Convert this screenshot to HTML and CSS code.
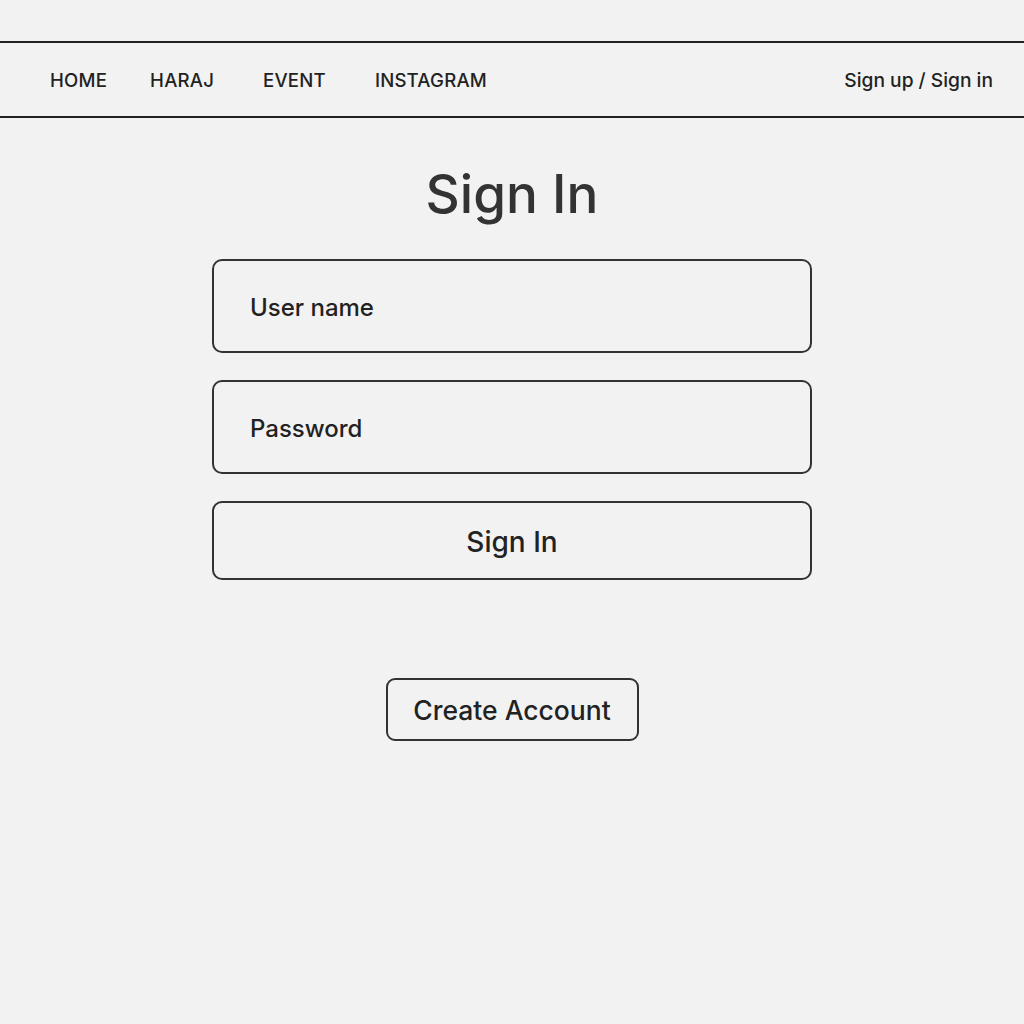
FILE: index.html
```html
<!DOCTYPE html>
<html>
<head>
<meta charset="utf-8">
<link rel="stylesheet" href="styles.css">
</head>
<body>
<header class="topbar">
  <nav class="nav-left">
    <a class="nav-link l-home">HOME</a>
    <a class="nav-link l-haraj">HARAJ</a>
    <a class="nav-link l-event">EVENT</a>
    <a class="nav-link">INSTAGRAM</a>
  </nav>
  <a class="nav-auth">Sign up / Sign in</a>
</header>
<main class="main">
  <h1 class="title">Sign In</h1>
  <form class="form">
    <div class="field">User name</div>
    <div class="field">Password</div>
    <div class="btn-signin">Sign In</div>
  </form>
  <div class="btn-create">Create Account</div>
</main>
</body>
</html>
```
FILE: styles.css
```css
html, body {
  margin: 0;
  padding: 0;
  background: #f2f2f2;
  font-family: Inter, "Noto Sans", sans-serif;
  color: #222;
}
.topbar {
  margin-top: 41px;
  height: 73px;
  border-top: 2px solid #222;
  border-bottom: 2px solid #222;
  display: flex;
  align-items: center;
  justify-content: space-between;
  padding: 0 31px 0 50px;
}
.nav-left {
  display: flex;
  align-items: center;
}
.nav-link {
  font-size: 18.6px;
  font-weight: 500;
  letter-spacing: 0.2px;
}
.l-home { margin-right: 43px; }
.l-haraj { margin-right: 49px; }
.l-event { margin-right: 49px; }
.nav-auth {
  font-size: 19.2px;
  font-weight: 500;
}
.main {
  display: flex;
  flex-direction: column;
  align-items: center;
}
.title {
  margin: 40px 0 0 0;
  height: 101px;
  line-height: 72px;
  font-size: 53px;
  font-weight: 500;
  color: #333;
}
.form {
  width: 600px;
  display: flex;
  flex-direction: column;
  gap: 27px;
}
.field, .btn-signin {
  box-sizing: border-box;
  height: 94px;
  border: 2px solid #333;
  border-radius: 10px;
  display: flex;
  align-items: center;
  padding-left: 36px;
  padding-top: 2px;
  font-size: 24px;
  font-weight: 500;
}
.btn-signin {
  height: 79px;
  padding-left: 0;
  justify-content: center;
  font-size: 28px;
}
.btn-create {
  margin-top: 98px;
  box-sizing: border-box;
  width: 253px;
  height: 63px;
  border: 2px solid #333;
  border-radius: 9px;
  display: flex;
  align-items: center;
  justify-content: center;
  font-size: 26.5px;
  font-weight: 500;
}
```
